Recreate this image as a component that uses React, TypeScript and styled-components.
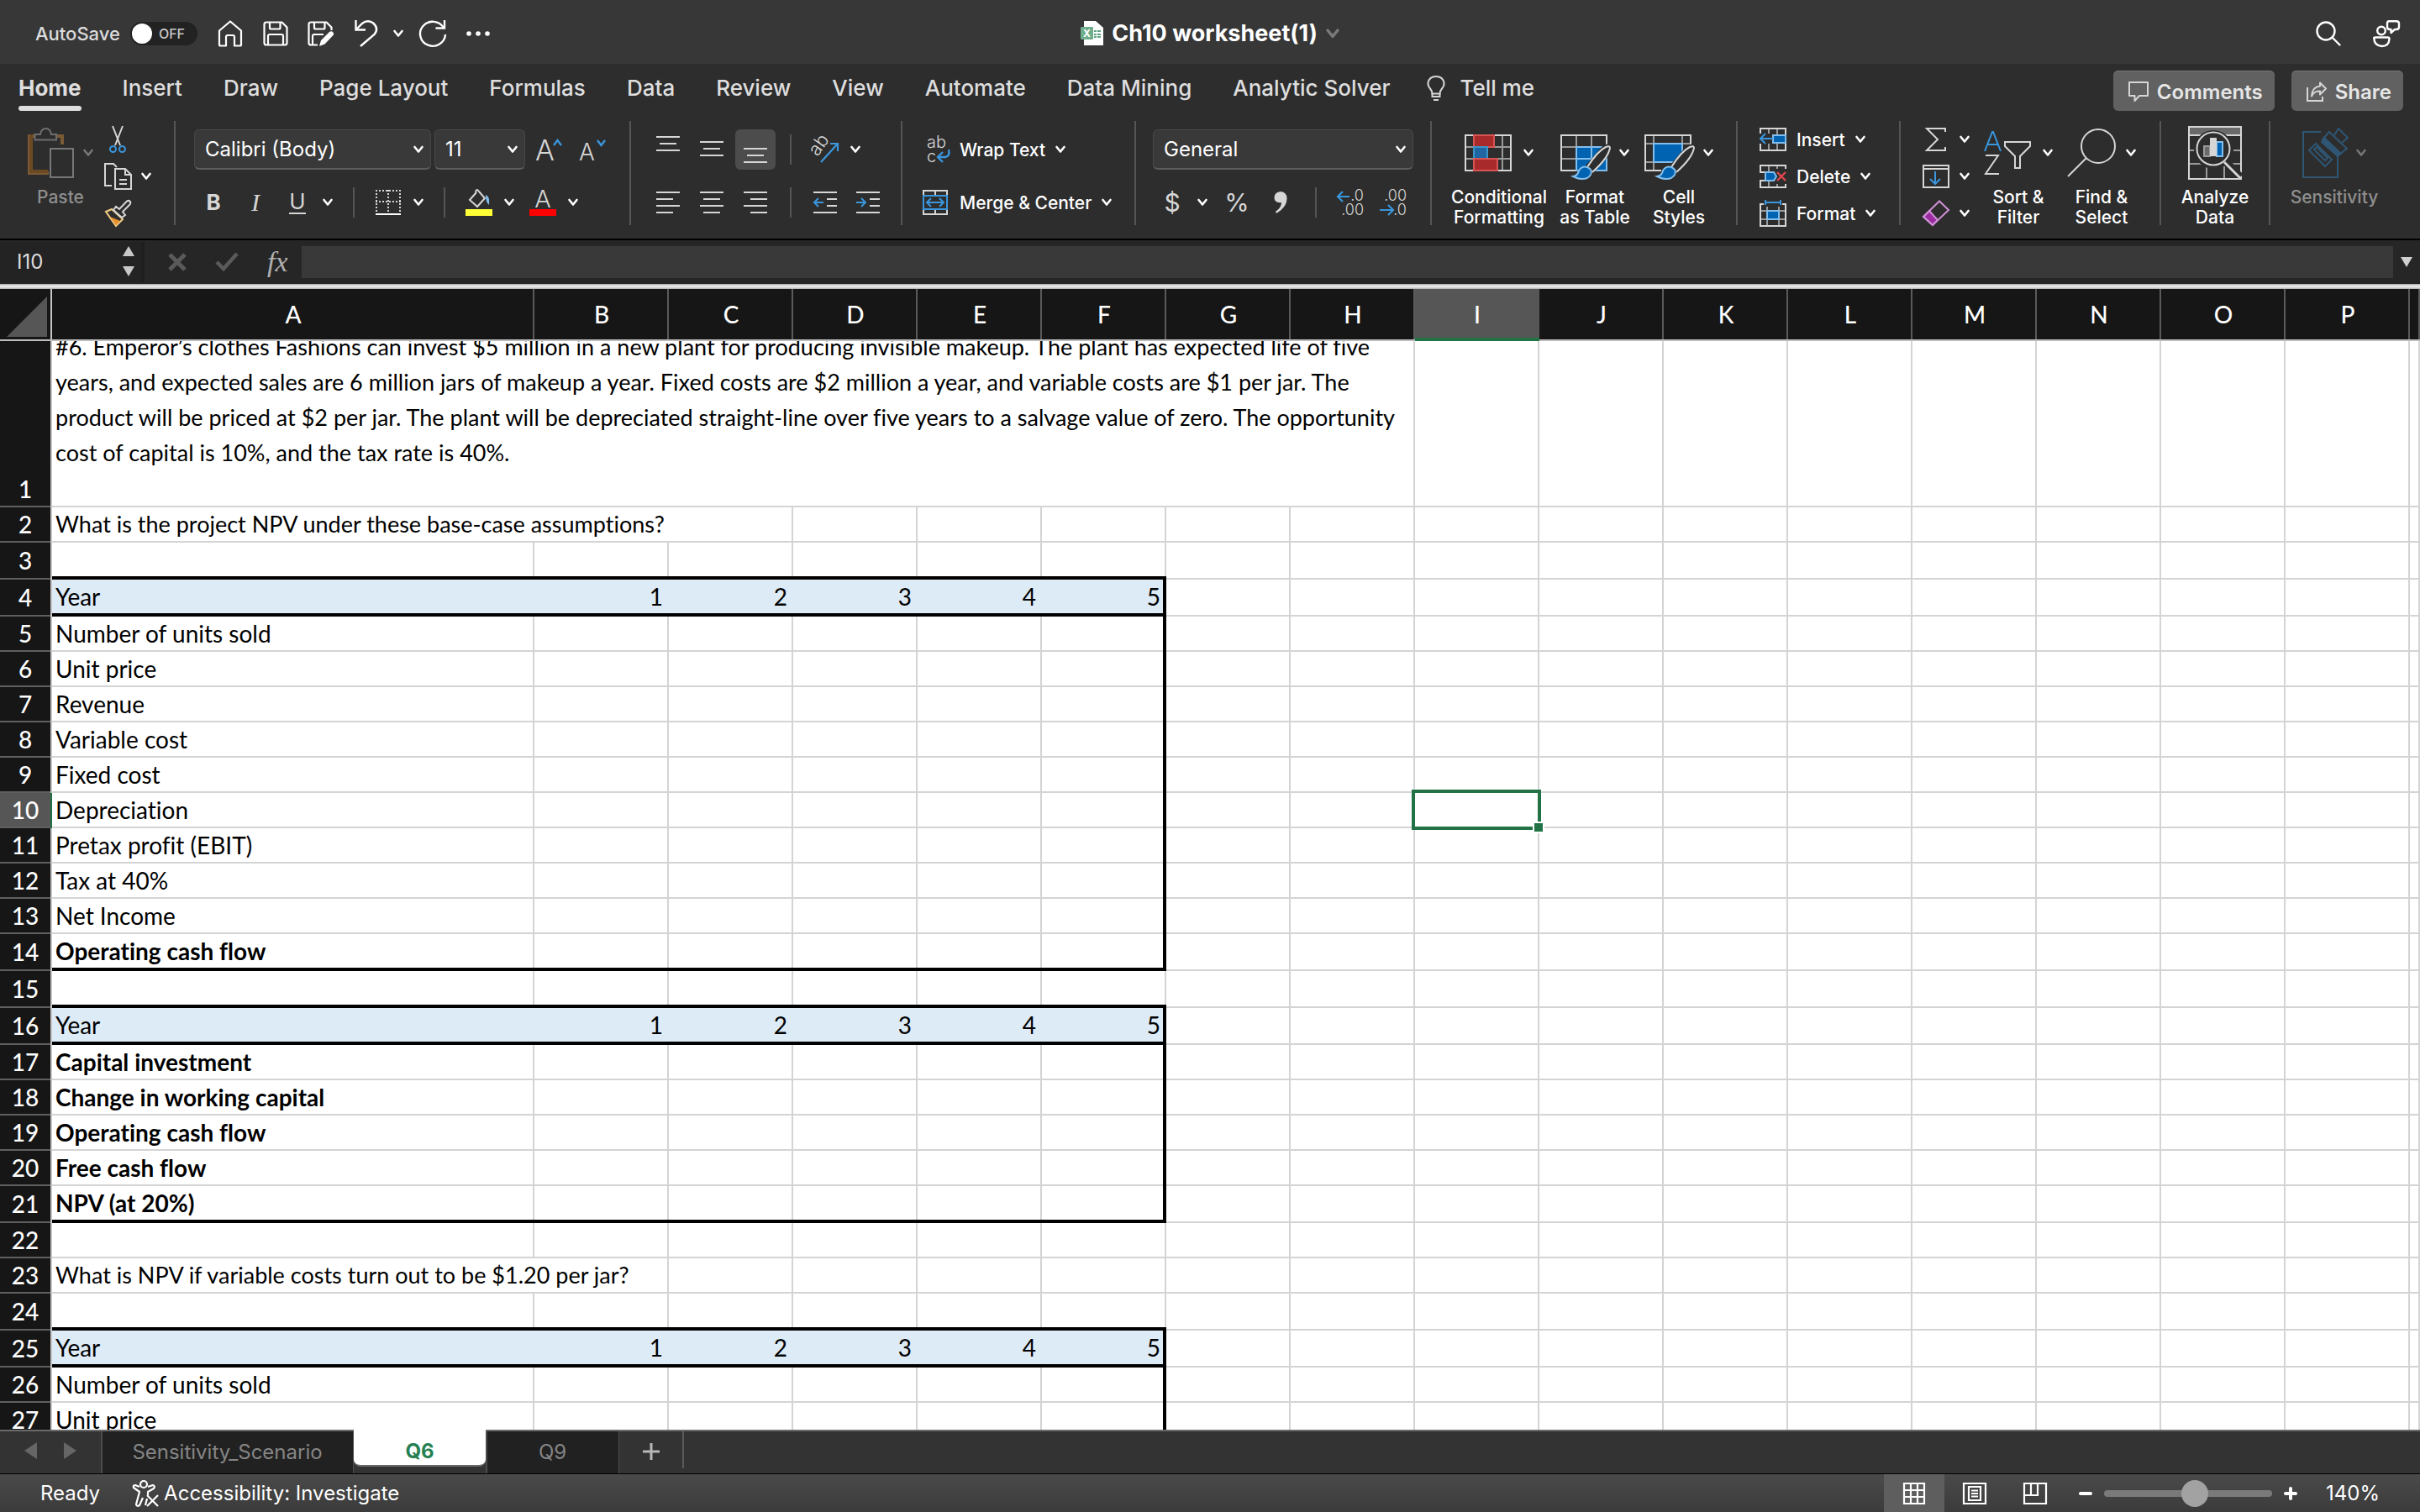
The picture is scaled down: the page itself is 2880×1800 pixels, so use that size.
import React from 'react';
import styled, { createGlobalStyle, css } from 'styled-components';

const GlobalStyle = createGlobalStyle`
  *, *::before, *::after { box-sizing: border-box; }
  html, body { margin: 0; padding: 0; background: #2d2d2d; }
  body { font-family: Inter, Roboto, "Liberation Sans", sans-serif; }
  button, input, select { font: inherit; color: inherit; }
`;

const LINE = '#d6d6d6';
const BLUE = '#3a96dd';
const LIGHT = '#83beec';
const DEEP = '#0063b1';
const GRID = '#d4d4d4';

const Window = styled.div`
  display: flex;
  flex-direction: column;
  height: 100vh;
  min-height: 0;
  overflow: hidden;
  color: #fff;
`;

/* ---------- shared pieces ---------- */

const Svg = styled.svg`
  display: block;
  flex: none;
  overflow: visible;
`;

const PlainButton = styled.button`
  display: inline-flex;
  align-items: center;
  justify-content: center;
  padding: 0;
  border: 0;
  background: none;
  flex: none;
`;

const Chevron = ({ color = '#fff', size = 12 }: { color?: string; size?: number }) => (
  <Svg width={size} height={size} viewBox="0 0 12 12" fill="none" stroke={color} strokeWidth="2.6" strokeLinecap="round" strokeLinejoin="round" aria-hidden="true">
    <path d="M1.5 3 L6 8.5 L10.5 3" />
  </Svg>
);

/* ---------- title bar ---------- */

const TitleBar = styled.header`
  display: grid;
  grid-template-columns: 1fr auto 1fr;
  align-items: center;
  flex: none;
  height: 76px;
  padding: 4px 24px 0;
  background: #373737;
`;

const QuickAccess = styled.div`
  display: flex;
  align-items: center;
  padding-left: 18px;
`;

const AutoSaveLabel = styled.label`
  display: flex;
  align-items: center;
  gap: 12px;
  margin-right: 12px;
  font-size: 22px;
  font-weight: 500;
  color: #dcdcdc;
`;

const HiddenCheck = styled.input`
  position: absolute;
  width: 1px;
  height: 1px;
  opacity: 0;
`;

const SwitchTrack = styled.span`
  display: flex;
  align-items: center;
  gap: 8px;
  width: 80px;
  height: 28px;
  padding: 0 2px;
  border-radius: 14px;
  background: #222;
  font-size: 16px;
  font-weight: 500;
  color: #c8c8c8;
`;

const SwitchKnob = styled.span`
  width: 24px;
  height: 24px;
  border-radius: 50%;
  background: #fff;
`;

const QuickButton = styled(PlainButton)<{ $w?: number }>`
  width: ${(p) => p.$w ?? 54}px;
  height: 44px;
`;

const DocTitle = styled.h1`
  display: flex;
  align-items: center;
  gap: 10px;
  margin: 0;
  font-size: 27px;
  line-height: 32px;
  font-weight: 700;
`;

const TitleRight = styled.div`
  display: flex;
  justify-content: flex-end;
  gap: 38px;
`;

/* ---------- ribbon ---------- */

const Ribbon = styled.section`
  flex: none;
  height: 210px;
  border-bottom: 2px solid #000;
  background: #2d2d2d;
`;

const TabStrip = styled.div`
  display: flex;
  justify-content: space-between;
  height: 68px;
  padding: 8px 20px 0 22px;
`;

const Tabs = styled.nav`
  display: flex;
  align-items: flex-start;
  gap: 49px;
  padding-top: 6px;
`;

const Tab = styled.button<{ $active?: boolean }>`
  display: flex;
  flex-direction: column;
  gap: 6px;
  padding: 0;
  border: 0;
  background: none;
  font-size: 26px;
  line-height: 30px;
  font-weight: ${(p) => (p.$active ? 700 : 500)};
  color: #dedede;
  white-space: nowrap;
  ${(p) => p.$active && css`
    &::after { content: ''; width: 100%; height: 6px; border-radius: 3px; background: #dedede; }
  `}
`;

const TellMe = styled(PlainButton)`
  gap: 18px;
  height: 30px;
  margin-left: -6px;
  font-size: 26px;
  line-height: 30px;
  font-weight: 500;
  color: #dedede;
`;

const Actions = styled.div`
  display: flex;
  gap: 20px;
`;

const ActionButton = styled(PlainButton)`
  gap: 10px;
  height: 48px;
  padding: 2px 14px 0 18px;
  border-radius: 6px;
  background: #616161;
  font-size: 24px;
  font-weight: 600;
  color: #e6e6e6;
  box-shadow: inset 0 1px 0 #767676;
`;

const Groups = styled.div`
  display: flex;
  height: 124px;
`;

const Group = styled.div<{ $w: number; $pad?: number; $last?: boolean }>`
  display: flex;
  align-items: flex-start;
  flex: none;
  width: ${(p) => p.$w}px;
  padding-left: ${(p) => p.$pad ?? 20}px;
  border-right: ${(p) => (p.$last ? '0' : '2px solid #555')};
`;

const Lines = styled.div`
  display: flex;
  flex-direction: column;
  gap: 20px;
  padding-top: 10px;
`;

const ToolRow = styled.div<{ $h?: number }>`
  display: flex;
  align-items: center;
  gap: 4px;
  height: ${(p) => p.$h ?? 38}px;
`;

const Tool = styled(PlainButton)<{ $w?: number; $active?: boolean }>`
  width: ${(p) => p.$w ?? 48}px;
  height: 100%;
  border-radius: 6px;
  background: ${(p) => (p.$active ? '#4c4c4c' : 'none')};
  color: ${LINE};
`;

const Split = styled.div`
  display: flex;
  height: 100%;
`;

const MiniSep = styled.span`
  width: 2px;
  height: 36px;
  margin: 0 13px;
  background: #555;
`;

const Letter = styled.span<{ $size?: number; $kind?: 'bold' | 'italic' | 'underline' }>`
  font-size: ${(p) => p.$size ?? 26}px;
  line-height: 28px;
  font-weight: ${(p) => (p.$kind === 'bold' ? 700 : 400)};
  ${(p) => p.$kind === 'italic' && css`font-family: "Liberation Serif", serif; font-style: italic; font-size: 30px;`}
  ${(p) => p.$kind === 'underline' && css`border-bottom: 2px solid ${LINE}; line-height: 26px;`}
`;

const SelectBox = styled.div<{ $w: number }>`
  display: grid;
  align-items: center;
  width: ${(p) => p.$w}px;
  height: 48px;
  border: 1px solid #484848;
  border-bottom: 2px solid #5c5c5c;
  border-radius: 6px;
  background: #393939;
  & > * { grid-area: 1 / 1; }
  & > svg { justify-self: end; margin-right: 8px; pointer-events: none; }
`;

const Select = styled.select`
  appearance: none;
  width: 100%;
  height: 45px;
  padding: 0 32px 0 12px;
  border: 0;
  background: transparent;
  font-size: 24px;
  color: #fff;
`;

const LabelButton = styled(PlainButton)<{ $h?: number }>`
  justify-content: flex-start;
  gap: 12px;
  height: ${(p) => p.$h ?? 44}px;
  font-size: 21px;
  font-weight: 500;
  color: #fff;
  white-space: nowrap;
`;

const Stack = styled.div`
  display: flex;
  flex-direction: column;
`;

const BigButton = styled.button<{ $w: number; $dim?: boolean }>`
  display: flex;
  flex-direction: column;
  align-items: center;
  flex: none;
  gap: 9px;
  width: ${(p) => p.$w}px;
  padding: 6px 0 0;
  border: 0;
  background: none;
  font-size: 21px;
  line-height: 24px;
  font-weight: 500;
  white-space: nowrap;
  color: ${(p) => (p.$dim ? '#8f8f8f' : '#fff')};
`;

const BigIcon = styled.span`
  display: flex;
  align-items: center;
  gap: 10px;
  height: 64px;
`;

/* ---------- formula bar ---------- */

const FormulaBar = styled.section`
  display: flex;
  align-items: center;
  flex: none;
  height: 52px;
  background: #262626;
`;

const NameBox = styled.div`
  display: flex;
  align-items: center;
  width: 172px;
  height: 48px;
  padding: 0 8px 2px 20px;
  border-right: 4px solid #1e1e1e;
  background: #232323;
`;

const NameInput = styled.input`
  flex: 1;
  min-width: 0;
  padding: 0;
  border: 0;
  background: none;
  font-size: 24px;
  color: #dcdcdc;
`;

const Stepper = styled.span`
  display: flex;
  flex-direction: column;
  gap: 12px;
`;

const FormulaTools = styled.div`
  display: flex;
  align-items: center;
  gap: 34px;
  padding: 0 16px 0 28px;
`;

const FxButton = styled(PlainButton)`
  font-family: "Liberation Serif", serif;
  font-style: italic;
  font-size: 34px;
  line-height: 38px;
  color: #b0b0b0;
`;

const FormulaInput = styled.input`
  flex: 1;
  height: 38px;
  padding: 0 8px;
  border: 0;
  background: #393939;
  color: #fff;
`;

const FormulaEnd = styled(PlainButton)`
  width: 32px;
  height: 38px;
`;

const Divider = styled.div`
  flex: none;
  height: 6px;
  background: linear-gradient(#a8a8a8, #f4f4f4 50%, #b0b0b0);
`;

/* ---------- sheet ---------- */

const Sheet = styled.main`
  flex: 1;
  min-height: 0;
  overflow: hidden;
  background: #fff;
`;

const Grid = styled.table`
  width: 100%;
  table-layout: fixed;
  border-collapse: separate;
  border-spacing: 0;
  font-family: Lato, Carlito, sans-serif;
  font-size: 28px;
  font-variant-ligatures: none;
  line-height: 40px;
  color: #000;
`;

const Corner = styled.td`
  height: 62px;
  padding: 8px 4px 4px 8px;
  background: #161616;
  box-shadow: inset 0 -2px #bdbdbd, inset -2px 0 #c6c6c6;
`;

const ColHead = styled.th<{ $active?: boolean }>`
  height: 62px;
  padding: 0 0 2px;
  background: ${(p) => (p.$active ? '#565656' : '#161616')};
  box-shadow: ${(p) => (p.$active ? 'inset 0 -4px #217346' : 'inset 0 -2px #bdbdbd, inset -2px 0 #5a5a5a')};
  font-weight: 500;
  color: #fff;
`;

const RowHead = styled.th<{ $active?: boolean; $tall?: boolean }>`
  padding: 0 2px 2px 0;
  vertical-align: ${(p) => (p.$tall ? 'bottom' : 'middle')};
  background: ${(p) => (p.$active ? '#565656' : '#161616')};
  box-shadow: ${(p) => (p.$active ? 'inset -2px 0 #217346' : 'inset -2px 0 #c6c6c6')}, inset 0 -2px #5f5f5f;
  font-weight: 500;
  color: #fff;
`;

const Row = styled.tr<{ $h: number }>`
  height: ${(p) => p.$h}px;
`;

type Edge = 'grid' | 'heavy' | 'none';
const below = (e: Edge) => (e === 'heavy' ? 'inset 0 -4px #000' : `inset 0 -2px ${GRID}`);
const beside = (e: Edge) =>
  e === 'heavy' ? 'inset -4px 0 #000' : e === 'none' ? 'inset 0 0 transparent' : `inset -2px 0 ${GRID}`;

/* The first shadow in the list is painted on top, so a heavy edge always leads. */
const edges = (right: Edge, bottom: Edge) =>
  bottom === 'heavy' ? `${below(bottom)}, ${beside(right)}` : `${beside(right)}, ${below(bottom)}`;

const Cell = styled.td<{ $right: Edge; $bottom: Edge; $fill?: boolean; $bold?: boolean; $num?: boolean; $note?: boolean }>`
  position: relative;
  padding: 0 ${(p) => (p.$num ? 7 : 0)}px 0 ${(p) => (p.$num ? 0 : 4)}px;
  vertical-align: top;
  text-align: ${(p) => (p.$num ? 'right' : 'left')};
  font-size: ${(p) => (p.$note ? 27 : 28)}px;
  font-weight: ${(p) => (p.$bold ? 700 : 400)};
  white-space: nowrap;
  background: ${(p) => (p.$fill ? '#ddebf7' : '#fff')};
  box-shadow: ${(p) => edges(p.$right, p.$bottom)};
`;

const Paragraph = styled.div`
  display: flex;
  align-items: flex-end;
  height: 196px;
  overflow: hidden;
  line-height: 42px;
`;

const Selection = styled.div`
  position: absolute;
  z-index: 1;
  inset: -4px -2px -2px -4px;
  border: 4px solid #217346;
  &::after {
    content: '';
    position: absolute;
    right: -8px;
    bottom: -8px;
    width: 14px;
    height: 14px;
    border: 2px solid #fff;
    background: #217346;
  }
`;

/* ---------- sheet tabs and status bar ---------- */

const SheetTabs = styled.nav`
  display: flex;
  flex: none;
  height: 52px;
  border-top: 2px solid #6a6a6a;
  background: #333;
`;

const Arrows = styled.div`
  display: flex;
  align-items: center;
  justify-content: center;
  gap: 32px;
  width: 120px;
  padding-bottom: 4px;
`;

const SheetTab = styled.button<{ $w: number; $active?: boolean }>`
  width: ${(p) => p.$w}px;
  padding: 0 0 2px;
  border: 0;
  font-size: 24px;
  ${(p) => p.$active
    ? css`
        height: 44px;
        margin-top: -2px;
        padding: 8px 0 0;
        border-bottom: 2px solid #6a6a6a;
        border-radius: 0 0 8px 8px;
        background: #fff;
        font-weight: 700;
        color: #268052;
      `
    : css`
        background: #212121;
        color: #858585;
        box-shadow: inset 2px 0 #4c4c4c, inset -1px 0 #4c4c4c;
      `}
`;

const AddSheet = styled(PlainButton)`
  width: 77px;
  height: 44px;
  padding-top: 4px;
  border-right: 2px solid #5a5a5a;
`;

const StatusBar = styled.footer`
  display: flex;
  align-items: center;
  justify-content: space-between;
  flex: none;
  height: 46px;
  padding: 0 48px;
  border-top: 1px solid #000;
  background: linear-gradient(#4a4a4a, #3b3b3b);
  font-size: 24px;
`;

const StatusLeft = styled.div`
  display: flex;
  align-items: center;
  gap: 38px;
`;

const StatusButton = styled(PlainButton)`
  gap: 6px;
`;

const StatusRight = styled.div`
  display: flex;
  align-items: center;
  height: 100%;
`;

const ViewButton = styled(PlainButton)<{ $active?: boolean }>`
  width: 72px;
  height: 100%;
  background: ${(p) => (p.$active ? '#5e5e5e' : 'none')};
`;

const ZoomControl = styled.div`
  display: flex;
  align-items: center;
  gap: 14px;
  margin: 0 34px 0 16px;
`;

const ZoomSlider = styled.input`
  appearance: none;
  width: 200px;
  height: 32px;
  margin: 0;
  background: none;
  &::-webkit-slider-runnable-track {
    height: 8px;
    border-radius: 4px;
    background: #7a7a7a;
  }
  &::-webkit-slider-thumb {
    appearance: none;
    width: 32px;
    height: 32px;
    margin-top: -12px;
    border-radius: 50%;
    background: #a2a2a2;
  }
`;

/* ---------- icons ---------- */

const stroke = { fill: 'none', stroke: LINE, strokeWidth: 2 } as const;

const HomeIcon = () => (
  <Svg width="30" height="32" viewBox="0 0 30 32" fill="none" stroke="#fff" strokeWidth="2.2" strokeLinejoin="round">
    <path d="M2 12.5 L15 1.5 L28 12.5 V29 Q28 30.5 26.5 30.5 H20 V20 Q20 18 18 18 H12 Q10 18 10 20 V30.5 H3.5 Q2 30.5 2 29 Z" />
  </Svg>
);
const SaveIcon = () => (
  <Svg width="30" height="30" viewBox="0 0 30 30" fill="none" stroke="#fff" strokeWidth="2.2" strokeLinejoin="round">
    <path d="M4 1.5 H22.5 L28.5 7.5 V26 Q28.5 28.5 26 28.5 H4 Q1.5 28.5 1.5 26 V4 Q1.5 1.5 4 1.5 Z" />
    <path d="M8 2 V8 Q8 9.5 9.5 9.5 H19 Q20.5 9.5 20.5 8 V2" />
    <path d="M6 28 V18 Q6 16 8 16 H22 Q24 16 24 18 V28" />
  </Svg>
);
const SaveAsIcon = () => (
  <Svg width="32" height="30" viewBox="0 0 32 30" fill="none" stroke="#fff" strokeWidth="2.2" strokeLinejoin="round">
    <path d="M12 28.5 H4 Q1.5 28.5 1.5 26 V4 Q1.5 1.5 4 1.5 H22.5 L28.5 7.5 V11" />
    <path d="M8 2 V8 Q8 9.5 9.5 9.5 H19 Q20.5 9.5 20.5 8 V2" />
    <path d="M6 28 V18 Q6 16 8 16 H19" />
    <path d="M14 30 L16 23 L26 13 Q28.5 11.5 30.5 13.5 Q32 15.5 30 17.5 L20.5 27.5 Z" fill="#fff" stroke="none" />
  </Svg>
);
const UndoIcon = () => (
  <Svg width="28" height="32" viewBox="0 0 28 32" fill="none" stroke="#fff" strokeWidth="2.4">
    <path d="M1.5 0 V11.5 H13" />
    <path d="M2 11 L9 4 Q15 -1 21.5 3 Q29.5 9.5 23.5 17 L7 31" />
  </Svg>
);
const RedoIcon = () => (
  <Svg width="34" height="32" viewBox="0 0 34 32" fill="none" stroke="#fff" strokeWidth="2.4">
    <path d="M31 0 V9.5 H20.5" />
    <path d="M30 9 A 15 14.5 0 1 0 32 17" />
  </Svg>
);
const DotsIcon = () => (
  <Svg width="28" height="6" viewBox="0 0 28 6" fill="#fff">
    <circle cx="3" cy="3" r="2.8" /><circle cx="14" cy="3" r="2.8" /><circle cx="25" cy="3" r="2.8" />
  </Svg>
);
const WorkbookIcon = () => (
  <Svg width="27" height="30" viewBox="0 0 27 30">
    <path d="M4 0 H18 L27 8 V29 H4 Z" fill="#fff" />
    <g fill="#5fa583"><rect x="16" y="11" width="3" height="2" /><rect x="20" y="11" width="4" height="2" /><rect x="16" y="15" width="3" height="2" /><rect x="20" y="15" width="4" height="2" /><rect x="16" y="18" width="3" height="2" /><rect x="20" y="18" width="4" height="2" /></g>
    <rect x="0" y="7" width="15" height="15" rx="1" fill="#6fae8d" />
    <text x="7.5" y="19" fontSize="12" fill="#fff" textAnchor="middle" fontFamily="Inter">X</text>
  </Svg>
);
const SearchIcon = () => (
  <Svg width="30" height="30" viewBox="0 0 30 30" fill="none" stroke="#fff" strokeWidth="2.4" strokeLinecap="round">
    <circle cx="12" cy="12" r="10.5" /><path d="M19.5 19.5 L28.5 28.5" />
  </Svg>
);
const PersonIcon = () => (
  <Svg width="32" height="32" viewBox="0 0 32 32" fill="none" stroke="#fff" strokeWidth="2.4" strokeLinejoin="round">
    <circle cx="10" cy="12.5" r="4.8" />
    <path d="M1.2 21 Q1.2 20.5 3 20.5 H17.5 Q19.5 20.5 19.5 22.5 Q19 31 10.5 31 Q1.5 30.5 1.2 21 Z" />
    <path d="M19 1.2 H28 Q31 1.2 31 4 V8 Q31 11 28 11 H26 L21.5 15 V11 H20 Q17 11 17 8 V4 Q17 1.2 19 1.2 Z" />
  </Svg>
);
const BulbIcon = () => (
  <Svg width="22" height="30" viewBox="0 0 22 30" {...stroke}>
    <path d="M6.5 21.5 Q6.5 18.5 4 15.5 Q1 12 1.5 8.5 Q3 1 11 1 Q19 1 20.5 8.5 Q21 12 18 15.5 Q15.5 18.5 15.5 21.5 Z" />
    <path d="M6.5 21 V25 H15.5 V21 M8 29 H14" />
  </Svg>
);
const CommentIcon = () => (
  <Svg width="24" height="24" viewBox="0 0 24 24" {...stroke} strokeLinejoin="round">
    <path d="M1 1 H23 V17 H13 L7.5 23 V17 H1 Z" />
  </Svg>
);
const ShareIcon = () => (
  <Svg width="24" height="24" viewBox="0 0 24 24" {...stroke}>
    <path d="M1 7 V23 H19 V18" />
    <path d="M16 1.5 L23 8.5 L16 15.5 V11.5 Q9 11 6 17.5 Q6.5 6.5 16 5.5 Z" strokeLinejoin="round" />
  </Svg>
);
const PasteIcon = () => (
  <Svg width="56" height="60" viewBox="0 0 56 60" fill="none">
    <path d="M9 10 H2 V54 H25 M33 10 H41 V20" stroke="#7b5a35" strokeWidth="4" />
    <path d="M4 8 V52 H24" stroke="#6b4a22" strokeWidth="4" />
    <path d="M8.5 14.5 V8 H15 Q16 1 21.5 1 Q27 1 28 8 H34 V14.5 Z" stroke="#6e6e6e" strokeWidth="2" fill="#2d2d2d" />
    <rect x="27" y="25" width="27" height="34" stroke="#777" strokeWidth="2" fill="#2d2d2d" />
  </Svg>
);
const CutIcon = () => (
  <Svg width="32" height="32" viewBox="0 0 32 32" {...stroke}>
    <path d="M10 0 L19 23 M22 0 L13 23" />
    <circle cx="10.5" cy="27.5" r="3.5" stroke={BLUE} /><circle cx="21.5" cy="27.5" r="3.5" stroke={BLUE} />
  </Svg>
);
const CopyIcon = () => (
  <Svg width="32" height="32" viewBox="0 0 32 32" {...stroke}>
    <path d="M9 27 H1 V1 H11 L15 5" />
    <path d="M13 7 H25 L32 14 V31 H13 Z M25 7 V14 H32 M18 20 H27 M18 25 H27" />
  </Svg>
);
const BrushIcon = () => (
  <Svg width="32" height="32" viewBox="0 0 32 32" {...stroke}>
    <path d="M2 14 L9 11 L22 23 L14 31 Z" stroke="#f3cf86" />
    <path d="M7 20 L19 25 L14 30 Z" fill="#e8912d" stroke="none" />
    <path d="M11 12 L14 8 L18 11 L27 1.5 Q29 0 31 2 Q32 4 30 6 L22 14 L25 18 L21 21 Z" />
  </Svg>
);
const GrowIcon = ({ up }: { up?: boolean }) => (
  <Svg width="32" height="28" viewBox="0 0 32 28">
    <text x="0" y="27" fontSize={up ? 34 : 28} fontWeight="300" fill={LINE} fontFamily="Inter">A</text>
    <path d={up ? 'M22 9 L26.5 3 L31 9' : 'M22 3 L26.5 9 L31 3'} fill="none" stroke={BLUE} strokeWidth="2.4" />
  </Svg>
);
const BordersIcon = () => (
  <Svg width="30" height="30" viewBox="0 0 30 30" fill="none" stroke={LINE} strokeWidth="2">
    <path d="M0 1 H30 M1 0 V26 M29 0 V26 M15 0 V26 M0 14 H30" strokeDasharray="2 2" />
    <path d="M0 29 H30" stroke="#fff" />
  </Svg>
);
const FillIcon = () => (
  <Svg width="32" height="34" viewBox="0 0 32 34" {...stroke}>
    <path d="M13 5 L5 14 L14 22 L23 12 L16 4 Q12 -1 12 7" />
    <path d="M24 8 Q29 9 28 20 Q24 17 24 8 Z" fill={LIGHT} stroke="none" />
    <rect x="0" y="25" width="32" height="8" fill="#ffff38" stroke="none" />
  </Svg>
);
const FontColorIcon = () => (
  <Svg width="32" height="34" viewBox="0 0 32 34">
    <text x="16" y="23" fontSize="29" fontWeight="300" fill={LINE} textAnchor="middle" fontFamily="Inter">A</text>
    <rect x="0" y="25" width="32" height="8" fill="#f00" />
  </Svg>
);
const VAlignIcon = ({ at }: { at: number }) => (
  <Svg width="28" height="32" viewBox="0 0 28 32" {...stroke}>
    <path d={`M0 ${at} H28 M4 ${at + 8} H24 M0 ${at + 16} H28`} />
  </Svg>
);
const HAlignIcon = ({ at }: { at: 'left' | 'center' | 'right' }) => {
  const [a, b] = at === 'left' ? [0, 20] : at === 'center' ? [4, 24] : [8, 28];
  return (
    <Svg width="28" height="26" viewBox="0 0 28 26" {...stroke}>
      <path d={`M0 1 H28 M${a} 9 H${b} M0 17 H28 M${a} 25 H${b}`} />
    </Svg>
  );
};
const IndentIcon = ({ out }: { out?: boolean }) => (
  <Svg width="28" height="26" viewBox="0 0 28 26" {...stroke}>
    <path d="M0 1 H28 M16 9 H28 M16 17 H28 M0 25 H28" />
    <path d={out ? 'M12 13 H1 M6 8 L1 13 L6 18' : 'M0 13 H11 M6 8 L11 13 L6 18'} stroke={BLUE} />
  </Svg>
);
const OrientationIcon = () => (
  <Svg width="32" height="32" viewBox="0 0 32 32">
    <text x="7" y="25" fontSize="22" fill={LINE} fontFamily="Inter" fontWeight="300" transform="rotate(-55 7 25)">ab</text>
    <path d="M11 31 L31 9 M22 9 H31 V18" fill="none" stroke={BLUE} strokeWidth="2.2" />
  </Svg>
);
const WrapIcon = () => (
  <Svg width="32" height="32" viewBox="0 0 32 32">
    <text x="5" y="14" fontSize="20" fill={LINE} fontFamily="Inter" fontWeight="300">ab</text>
    <text x="5" y="31" fontSize="20" fill={LINE} fontFamily="Inter" fontWeight="300">c</text>
    <path d="M31 16 Q33 24 27 25 H19 M24 19 L18 25 L24 31" fill="none" stroke={BLUE} strokeWidth="2.4" />
  </Svg>
);
const MergeIcon = () => (
  <Svg width="32" height="30" viewBox="0 0 32 30" {...stroke}>
    <path d="M1 7 V1 H29 V7 M1 23 V29 H29 V23 M15 1 V7 M15 23 V29" />
    <rect x="1" y="7" width="28" height="16" stroke={BLUE} />
    <path d="M6 15 H24 M10 10 L5 15 L10 20 M20 10 L25 15 L20 20" stroke={BLUE} />
  </Svg>
);
const CommaIcon = () => (
  <Svg width="16" height="26" viewBox="0 0 16 26" fill={LINE}>
    <path d="M8 0 Q16 1 15.5 9 Q15 19 3 26 L2 24 Q9 19 9 13 Q0.5 14 0.5 7 Q1 0.5 8 0 Z" />
  </Svg>
);
const DecimalIcon = ({ more }: { more?: boolean }) => (
  <Svg width="32" height="30" viewBox="0 0 32 30">
    <g fontSize="18" fill={LINE} fontFamily="Inter" fontWeight="300" textAnchor="end">
      <text x="32" y="13">{more ? '.0' : '.00'}</text>
      <text x="32" y="30">{more ? '.00' : '.0'}</text>
    </g>
    <path d={more ? 'M1 8 H15 M7 2 L1 8 L7 14' : 'M0 24 H15 M10 18 L16 24 L10 30'} fill="none" stroke={BLUE} strokeWidth="2.2" />
  </Svg>
);
const ConditionalIcon = () => (
  <Svg width="60" height="44" viewBox="0 0 60 44" {...stroke}>
    <path d="M45 1 V43 M1 15 H55 M1 29 H55 M11 1 V43" stroke="#9a9a9a" />
    <rect x="1" y="1" width="54" height="42" />
    <rect x="28" y="16" width="16" height="12" fill="#2d2d2d" stroke="none" />
    <rect x="11" y="1" width="24" height="14" fill="#a82a2a" stroke="#d85454" />
    <rect x="11" y="15" width="16" height="14" fill="#1f66a3" stroke="#3a96c8" />
    <rect x="11" y="29" width="28" height="14" fill="#a82a2a" stroke="#d85454" />
  </Svg>
);
const PaintBrush = () => (
  <g>
    <path d="M26 42 L48 16 Q54 10 60 12 Q63 16 58 25 L34 52 Z" fill="#2d2d2d" stroke="none" />
    <path d="M32 39 Q44 20 54 15 Q59 13 59 16 Q57 28 38 45" fill="#2d2d2d" />
    <path d="M15 50 Q21 49 22 43 Q26 37 32 39 Q39 42 36 48 Q30 57 15 50 Z" fill={DEEP} stroke={LIGHT} />
  </g>
);
const FormatTableIcon = () => (
  <Svg width="60" height="44" viewBox="0 0 60 44" {...stroke}>
    <path d="M19 1 V43 M37 1 V15 M1 15 H19 M1 29 H19" stroke="#9a9a9a" />
    <path d="M55 14 V1 H1 V43 H20" />
    <rect x="19" y="15" width="36" height="28" fill={DEEP} stroke={LIGHT} />
    <path d="M37 15 V43 M19 29 H55" stroke={LIGHT} />
    <PaintBrush />
  </Svg>
);
const CellStylesIcon = () => (
  <Svg width="60" height="44" viewBox="0 0 60 44" {...stroke}>
    <path d="M11 1 V43 M45 1 V11 M1 11 H55 M1 33 H11" stroke="#9a9a9a" />
    <path d="M55 12 V1 H1 V43 H20" />
    <rect x="11" y="11" width="34" height="22" fill={DEEP} stroke={LIGHT} />
    <PaintBrush />
  </Svg>
);
const InsertIcon = () => (
  <Svg width="32" height="28" viewBox="0 0 32 28" {...stroke}>
    <path d="M11 1 V27 M21 1 V27" stroke="#9a9a9a" />
    <rect x="1" y="1" width="30" height="26" />
    <rect x="0" y="7" width="17" height="12" fill="#2d2d2d" stroke="none" />
    <rect x="16" y="9" width="15" height="9" fill={DEEP} stroke={LIGHT} />
    <path d="M16 13 H2 M7 7 L1 13 L7 19" stroke={BLUE} />
  </Svg>
);
const DeleteIcon = () => (
  <Svg width="32" height="28" viewBox="0 0 32 28" {...stroke}>
    <path d="M11 1 V27 M21 1 V5 M21 23 V27" stroke="#9a9a9a" />
    <path d="M31 5 V1 H1 V9 H8 M8 19 H1 V27 H31 V23" />
    <path d="M7 9 H17 L20 14 L17 19 H7 Z" fill={DEEP} stroke={LIGHT} />
    <path d="M21 9 L31 19 M31 9 L21 19" stroke="#e0474c" strokeWidth="2.4" />
  </Svg>
);
const FormatIcon = () => (
  <Svg width="32" height="32" viewBox="0 0 32 32" {...stroke}>
    <path d="M9 8 V31 M23 8 V31 M1 13 H31 M1 23 H31" stroke="#9a9a9a" />
    <path d="M5 5 H1 V31 H31 V5 H27" />
    <rect x="9" y="13" width="14" height="10" fill={DEEP} stroke={LIGHT} />
    <path d="M7 3 H25 M7 0 V6 M25 0 V6" stroke={BLUE} />
  </Svg>
);
const SumIcon = () => (
  <Svg width="32" height="28" viewBox="0 0 32 28" {...stroke}>
    <path d="M27 5 V1 H5 L18 14 L5 27 H27 V23" />
  </Svg>
);
const FillDownIcon = () => (
  <Svg width="32" height="28" viewBox="0 0 32 28" {...stroke}>
    <path d="M1 1 H31 V27 H1 Z M1 5 H31" />
    <path d="M15 8 V23 M9 17 L15 23 L21 17" stroke={BLUE} />
  </Svg>
);
const EraserIcon = () => (
  <Svg width="32" height="32" viewBox="0 0 32 32" fill="none" stroke="#cf8fd6" strokeWidth="2">
    <path d="M8 13 L18 24 L12 30 L1 20 Z" fill="#9a2ca0" />
    <path d="M1 20 L20 1.5 L31 12 L12 30 Z" />
  </Svg>
);
const SortIcon = () => (
  <Svg width="60" height="54" viewBox="0 0 60 54" {...stroke}>
    <path d="M1 25 L10 2 H11 L20 25 M4 17 H17" stroke={BLUE} />
    <path d="M2 30 H17 L2 52 H18" />
    <path d="M25 14 H55 V19 L43 31 V45 H37 V31 L25 19 Z" />
  </Svg>
);
const FindIcon = () => (
  <Svg width="60" height="58" viewBox="0 0 60 58" {...stroke}>
    <circle cx="37" cy="21" r="20" /><path d="M23 35 L1 57" />
  </Svg>
);
const AnalyzeIcon = () => (
  <Svg width="64" height="64" viewBox="0 0 64 64" {...stroke}>
    <rect x="1" y="1" width="62" height="10" fill="#6a6a6a" />
    <path d="M1 29 H8 M54 29 H63 M1 45 H16 M44 45 H63 M22 48 V63 M43 48 V63" stroke="#9a9a9a" />
    <rect x="1" y="1" width="62" height="62" />
    <circle cx="30" cy="28" r="23" fill="#2d2d2d" stroke="none" />
    <path d="M44 40 L63 60" stroke="#2d2d2d" strokeWidth="7" />
    <circle cx="30" cy="27" r="19.5" fill="#2d2d2d" />
    <rect x="19" y="24" width="7" height="12" fill="#6a6a6a" stroke="#9a9a9a" />
    <rect x="34" y="19" width="7" height="17" fill={DEEP} stroke={LIGHT} />
    <rect x="26" y="14" width="8" height="22" fill={LINE} stroke="none" />
    <path d="M43 43 L63 63" strokeWidth="3" />
  </Svg>
);
const SensitivityIcon = () => (
  <Svg width="54" height="60" viewBox="0 0 54 60" fill="none" stroke="#2f5673" strokeWidth="2">
    <path d="M22 5 H1 V59 H42 V34" />
    <path d="M8 27 L16 19 L35 38 L27 46 Z M14 26 L17 23 L30 36 L27 39 Z" />
    <path d="M24 14 L32 5 L53 25 L44 32 Z" />
    <path d="M26 12 L46 31 L42 34 L23 17 Z" fill="#2f5673" />
    <path d="M38 9 L43 1 L54 12 L47 18" />
  </Svg>
);
const Triangle = ({ dir, color, w, h }: { dir: 'up' | 'down' | 'left' | 'right'; color: string; w: number; h: number }) => {
  const d = {
    up: `M0 ${h} L${w / 2} 0 L${w} ${h} Z`,
    down: `M0 0 H${w} L${w / 2} ${h} Z`,
    left: `M${w} 0 V${h} L0 ${h / 2} Z`,
    right: `M0 0 V${h} L${w} ${h / 2} Z`,
  }[dir];
  return <Svg width={w} height={h} viewBox={`0 0 ${w} ${h}`}><path d={d} fill={color} /></Svg>;
};
const CancelIcon = () => (
  <Svg width="22" height="22" viewBox="0 0 22 22" fill="none" stroke="#5a5a5a" strokeWidth="5"><path d="M2 2 L20 20 M20 2 L2 20" /></Svg>
);
const CheckIcon = () => (
  <Svg width="28" height="22" viewBox="0 0 28 22" fill="none" stroke="#5a5a5a" strokeWidth="4.5"><path d="M2 11 L10 19 L26 1" /></Svg>
);
const AccessIcon = () => (
  <Svg width="32" height="32" viewBox="0 0 32 32" fill="none" stroke="#fff" strokeWidth="2.2" strokeLinejoin="round">
    <circle cx="14" cy="5" r="4" />
    <path d="M16 30 L18 22 M9 8 L4 6 Q1 6 2 9 L9 14 L5 29 Q6 32 9 30 L13 21 M19 8 L25 6 Q28 7 26 10 L19 14 V18" />
    <path d="M18 18 L31 31 M31 18 L18 31" />
  </Svg>
);
const NormalViewIcon = () => (
  <Svg width="26" height="26" viewBox="0 0 26 26" fill="none" stroke="#fff" strokeWidth="2.2">
    <path d="M1 1 H25 V25 H1 Z M9 1 V25 M17 1 V25 M1 9 H25 M1 17 H25" />
  </Svg>
);
const PageViewIcon = () => (
  <Svg width="28" height="26" viewBox="0 0 28 26" fill="none" stroke="#fff" strokeWidth="2.2">
    <path d="M1 1 H27 V25 H1 Z M7 5 H21 V21 H7 Z M10 9.5 H18 M10 13 H18 M10 16.5 H18" />
  </Svg>
);
const BreakViewIcon = () => (
  <Svg width="28" height="26" viewBox="0 0 28 26" fill="none" stroke="#fff" strokeWidth="2.2">
    <path d="M1 1 H27 V25 H1 Z M1 15 H17 V1 M9 1 V15" />
  </Svg>
);
const PlusMinus = ({ plus }: { plus?: boolean }) => (
  <Svg width="16" height="16" viewBox="0 0 16 16" stroke="#fff" strokeWidth="4" strokeLinecap="round"><path d={plus ? 'M2 8 H14 M8 2 V14' : 'M2 8 H14'} /></Svg>
);

/* ---------- data ---------- */

const COLUMNS = 'ABCDEFGHIJKLMNOP'.split('');
const WIDTHS = [574, 160, ...Array(14).fill(148)];

type RowData = {
  n: number;
  text?: string;
  bold?: boolean;
  kind?: 'blank' | 'year' | 'body' | 'note';
  span?: number;
  heavy?: boolean;
};

const ROWS: RowData[] = [
  { n: 2, kind: 'note', span: 3, text: 'What is the project NPV under these base-case assumptions?' },
  { n: 3, heavy: true },
  { n: 4, kind: 'year', heavy: true },
  ...['Number of units sold', 'Unit price', 'Revenue', 'Variable cost', 'Fixed cost', 'Depreciation', 'Pretax profit (EBIT)', 'Tax at 40%', 'Net Income']
    .map((text, i): RowData => ({ n: 5 + i, kind: 'body', text })),
  { n: 14, kind: 'body', text: 'Operating cash flow', bold: true, heavy: true },
  { n: 15, heavy: true },
  { n: 16, kind: 'year', heavy: true },
  ...['Capital investment', 'Change in working capital', 'Operating cash flow', 'Free cash flow']
    .map((text, i): RowData => ({ n: 17 + i, kind: 'body', text, bold: true })),
  { n: 21, kind: 'body', text: 'NPV (at 20%)', bold: true, heavy: true },
  { n: 22 },
  { n: 23, kind: 'note', span: 2, text: 'What is NPV if variable costs turn out to be $1.20 per jar?' },
  { n: 24, heavy: true },
  { n: 25, kind: 'year', heavy: true },
  { n: 26, kind: 'body', text: 'Number of units sold' },
  { n: 27, kind: 'body', text: 'Unit price' },
];

const SheetRow = ({ row }: { row: RowData }) => {
  const { n, kind = 'blank', text, bold, span = 1, heavy } = row;
  const cells: React.ReactNode[] = [];
  for (let c = 0; c < 17; c += c === 0 ? span : 1) {
    const inTable = c < 6;
    const year = kind === 'year' && inTable;
    const boxed = (kind === 'year' || kind === 'body') && c === 5;
    cells.push(
      <Cell
        key={c}
        colSpan={c === 0 && span > 1 ? span : undefined}
        $bottom={heavy && inTable ? 'heavy' : 'grid'}
        $right={boxed ? 'heavy' : year ? 'none' : 'grid'}
        $fill={year}
        $bold={bold}
        $num={year && c > 0}
        $note={kind === 'note'}
      >
        {c === 0 ? (kind === 'year' ? 'Year' : text) : year ? c : null}
        {n === 10 && c === 8 && <Selection />}
      </Cell>,
    );
  }
  return (
    <Row $h={heavy ? 44 : 42}>
      <RowHead scope="row" $active={n === 10}>{n}</RowHead>
      {cells}
    </Row>
  );
};

const TABS = ['Home', 'Insert', 'Draw', 'Page Layout', 'Formulas', 'Data', 'Review', 'View', 'Automate', 'Data Mining', 'Analytic Solver'];

const Drop = ({ label, w = 26 }: { label: string; w?: number }) => (
  <Tool $w={w} aria-label={label}><Chevron /></Tool>
);

export default function App() {
  return (
    <Window>
      <GlobalStyle />
      <TitleBar>
        <QuickAccess>
          <AutoSaveLabel>
            AutoSave
            <HiddenCheck type="checkbox" role="switch" />
            <SwitchTrack><SwitchKnob />OFF</SwitchTrack>
          </AutoSaveLabel>
          <QuickButton aria-label="Home"><HomeIcon /></QuickButton>
          <QuickButton aria-label="Save"><SaveIcon /></QuickButton>
          <QuickButton aria-label="Save as"><SaveAsIcon /></QuickButton>
          <QuickButton aria-label="Undo"><UndoIcon /></QuickButton>
          <QuickButton $w={22} aria-label="Undo history"><Chevron /></QuickButton>
          <QuickButton $w={60} aria-label="Redo"><RedoIcon /></QuickButton>
          <QuickButton $w={48} aria-label="More"><DotsIcon /></QuickButton>
        </QuickAccess>
        <DocTitle><WorkbookIcon />Ch10 worksheet(1)<Chevron color="#7a7a7a" size={16} /></DocTitle>
        <TitleRight>
          <PlainButton aria-label="Search"><SearchIcon /></PlainButton>
          <PlainButton aria-label="Presence"><PersonIcon /></PlainButton>
        </TitleRight>
      </TitleBar>

      <Ribbon>
        <TabStrip>
          <Tabs>
            {TABS.map((t) => <Tab key={t} $active={t === 'Home'}>{t}</Tab>)}
            <TellMe><BulbIcon />Tell me</TellMe>
          </Tabs>
          <Actions>
            <ActionButton><CommentIcon />Comments</ActionButton>
            <ActionButton><ShareIcon />Share</ActionButton>
          </Actions>
        </TabStrip>

        <Groups>
          <Group $w={209}>
            <BigButton $w={104} $dim>
              <BigIcon><PasteIcon /><Chevron color="#777" /></BigIcon>
              Paste
            </BigButton>
            <Stack>
              <LabelButton aria-label="Cut"><CutIcon /></LabelButton>
              <LabelButton aria-label="Copy"><CopyIcon /><Chevron /></LabelButton>
              <LabelButton aria-label="Format painter"><BrushIcon /></LabelButton>
            </Stack>
          </Group>

          <Group $w={542} $pad={22}>
            <Lines>
              <ToolRow $h={48}>
                <SelectBox $w={282}>
                  <Select aria-label="Font"><option>Calibri (Body)</option></Select><Chevron />
                </SelectBox>
                <SelectBox $w={108}>
                  <Select aria-label="Font size"><option>11</option></Select><Chevron />
                </SelectBox>
                <Tool aria-label="Increase font size"><GrowIcon up /></Tool>
                <Tool aria-label="Decrease font size"><GrowIcon /></Tool>
              </ToolRow>
              <ToolRow>
                <Tool $w={46}><Letter $kind="bold">B</Letter></Tool>
                <Tool $w={46}><Letter $kind="italic">I</Letter></Tool>
                <Split><Tool $w={46}><Letter $kind="underline">U</Letter></Tool><Drop label="Underline style" /></Split>
                <MiniSep />
                <Split><Tool $w={46} aria-label="Borders"><BordersIcon /></Tool><Drop label="Border style" /></Split>
                <MiniSep />
                <Split><Tool $w={46} aria-label="Fill colour"><FillIcon /></Tool><Drop label="Pick fill colour" /></Split>
                <Split><Tool $w={46} aria-label="Font colour"><FontColorIcon /></Tool><Drop label="Pick font colour" /></Split>
              </ToolRow>
            </Lines>
          </Group>

          <Group $w={323}>
            <Lines>
              <ToolRow $h={48}>
                <Tool aria-label="Top align"><VAlignIcon at={1} /></Tool>
                <Tool aria-label="Middle align"><VAlignIcon at={7} /></Tool>
                <Tool $active aria-label="Bottom align"><VAlignIcon at={15} /></Tool>
                <MiniSep />
                <Split><Tool $w={46} aria-label="Orientation"><OrientationIcon /></Tool><Drop label="Orientation options" /></Split>
              </ToolRow>
              <ToolRow>
                <Tool aria-label="Align left"><HAlignIcon at="left" /></Tool>
                <Tool aria-label="Centre"><HAlignIcon at="center" /></Tool>
                <Tool aria-label="Align right"><HAlignIcon at="right" /></Tool>
                <MiniSep />
                <Tool $w={46} aria-label="Decrease indent"><IndentIcon out /></Tool>
                <Tool aria-label="Increase indent"><IndentIcon /></Tool>
              </ToolRow>
            </Lines>
          </Group>

          <Group $w={278} $pad={24}>
            <Lines>
              <LabelButton $h={48}><WrapIcon />Wrap Text<Chevron /></LabelButton>
              <LabelButton $h={38}><MergeIcon />Merge &amp; Center<Chevron /></LabelButton>
            </Lines>
          </Group>

          <Group $w={352}>
            <Lines>
              <ToolRow $h={48}>
                <SelectBox $w={310}>
                  <Select aria-label="Number format"><option>General</option></Select><Chevron />
                </SelectBox>
              </ToolRow>
              <ToolRow>
                <Split><Tool $w={46}><Letter $size={30}>$</Letter></Tool><Drop label="Currency options" /></Split>
                <Tool><Letter $size={30}>%</Letter></Tool>
                <Tool aria-label="Comma style"><CommaIcon /></Tool>
                <MiniSep />
                <Tool $w={46} aria-label="Increase decimal"><DecimalIcon more /></Tool>
                <Tool aria-label="Decrease decimal"><DecimalIcon /></Tool>
              </ToolRow>
            </Lines>
          </Group>

          <Group $w={364}>
            <BigButton $w={120}><BigIcon><ConditionalIcon /><Chevron /></BigIcon><span>Conditional<br />Formatting</span></BigButton>
            <BigButton $w={108}><BigIcon><FormatTableIcon /><Chevron /></BigIcon><span>Format<br />as Table</span></BigButton>
            <BigButton $w={92}><BigIcon><CellStylesIcon /><Chevron /></BigIcon><span>Cell<br />Styles</span></BigButton>
          </Group>

          <Group $w={194} $pad={26}>
            <Stack>
              <LabelButton><InsertIcon />Insert<Chevron /></LabelButton>
              <LabelButton><DeleteIcon />Delete<Chevron /></LabelButton>
              <LabelButton><FormatIcon />Format<Chevron /></LabelButton>
            </Stack>
          </Group>

          <Group $w={310} $pad={26}>
            <Stack>
              <LabelButton aria-label="AutoSum"><SumIcon /><Chevron /></LabelButton>
              <LabelButton aria-label="Fill"><FillDownIcon /><Chevron /></LabelButton>
              <LabelButton aria-label="Clear"><EraserIcon /><Chevron /></LabelButton>
            </Stack>
            <BigButton $w={116}><BigIcon><SortIcon /><Chevron /></BigIcon><span>Sort &amp;<br />Filter</span></BigButton>
            <BigButton $w={82}><BigIcon><FindIcon /><Chevron /></BigIcon><span>Find &amp;<br />Select</span></BigButton>
          </Group>

          <Group $w={130} $pad={0}>
            <BigButton $w={128}><BigIcon><AnalyzeIcon /></BigIcon><span>Analyze<br />Data</span></BigButton>
          </Group>

          <Group $w={160} $pad={16} $last>
            <BigButton $w={120} $dim><BigIcon><SensitivityIcon /><Chevron color="#777" /></BigIcon>Sensitivity</BigButton>
          </Group>
        </Groups>
      </Ribbon>

      <FormulaBar>
        <NameBox>
          <NameInput aria-label="Name box" defaultValue="I10" />
          <Stepper>
            <Triangle dir="up" color="#c8c8c8" w={14} h={12} />
            <Triangle dir="down" color="#c8c8c8" w={14} h={12} />
          </Stepper>
        </NameBox>
        <FormulaTools>
          <PlainButton aria-label="Cancel"><CancelIcon /></PlainButton>
          <PlainButton aria-label="Enter"><CheckIcon /></PlainButton>
          <FxButton>fx</FxButton>
        </FormulaTools>
        <FormulaInput aria-label="Formula bar" />
        <FormulaEnd aria-label="Expand formula bar"><Triangle dir="down" color="#d0d0d0" w={14} h={12} /></FormulaEnd>
      </FormulaBar>
      <Divider />

      <Sheet>
        <Grid>
          <colgroup>
            <col width={62} />
            {WIDTHS.map((w, i) => <col key={i} width={w} />)}
            <col />
          </colgroup>
          <thead>
            <tr>
              <Corner><Svg width="48" height="48" viewBox="0 0 48 48"><path d="M48 0 V48 H0 Z" fill="#565656" /></Svg></Corner>
              {COLUMNS.map((c) => <ColHead key={c} scope="col" $active={c === 'I'}>{c}</ColHead>)}
              <ColHead aria-label="Q" />
            </tr>
          </thead>
          <tbody>
            <Row $h={198}>
              <RowHead scope="row" $tall>1</RowHead>
              <Cell colSpan={8} $right="grid" $bottom="grid" $note>
                <Paragraph>
                  <span>
                    #6. Emperor’s clothes Fashions can invest $5 million in a new plant for producing invisible makeup. The plant has expected life of five<br />
                    years, and expected sales are 6 million jars of makeup a year. Fixed costs are $2 million a year, and variable costs are $1 per jar. The<br />
                    product will be priced at $2 per jar. The plant will be depreciated straight-line over five years to a salvage value of zero. The opportunity<br />
                    cost of capital is 10%, and the tax rate is 40%.<br />
                    &nbsp;
                  </span>
                </Paragraph>
              </Cell>
              {Array.from({ length: 9 }, (_, i) => <Cell key={i} $right="grid" $bottom="grid" />)}
            </Row>
            {ROWS.map((r) => <SheetRow key={r.n} row={r} />)}
          </tbody>
        </Grid>
      </Sheet>

      <SheetTabs>
        <Arrows>
          <PlainButton aria-label="Previous sheet"><Triangle dir="left" color="#666" w={15} h={20} /></PlainButton>
          <PlainButton aria-label="Next sheet"><Triangle dir="right" color="#666" w={15} h={20} /></PlainButton>
        </Arrows>
        <SheetTab $w={301}>Sensitivity_Scenario</SheetTab>
        <SheetTab $w={157} $active>Q6</SheetTab>
        <SheetTab $w={159}>Q9</SheetTab>
        <AddSheet aria-label="Add sheet">
          <Svg width="20" height="20" viewBox="0 0 20 20" stroke="#b8b8b8" strokeWidth="3"><path d="M0 10 H20 M10 0 V20" /></Svg>
        </AddSheet>
      </SheetTabs>

      <StatusBar>
        <StatusLeft>
          <span>Ready</span>
          <StatusButton><AccessIcon />Accessibility: Investigate</StatusButton>
        </StatusLeft>
        <StatusRight>
          <ViewButton $active aria-label="Normal view"><NormalViewIcon /></ViewButton>
          <ViewButton aria-label="Page layout view"><PageViewIcon /></ViewButton>
          <ViewButton aria-label="Page break view"><BreakViewIcon /></ViewButton>
          <ZoomControl>
            <PlainButton aria-label="Zoom out"><PlusMinus /></PlainButton>
            <ZoomSlider type="range" min={10} max={270} defaultValue={153} aria-label="Zoom" />
            <PlainButton aria-label="Zoom in"><PlusMinus plus /></PlainButton>
          </ZoomControl>
          <span>140%</span>
        </StatusRight>
      </StatusBar>
    </Window>
  );
}
